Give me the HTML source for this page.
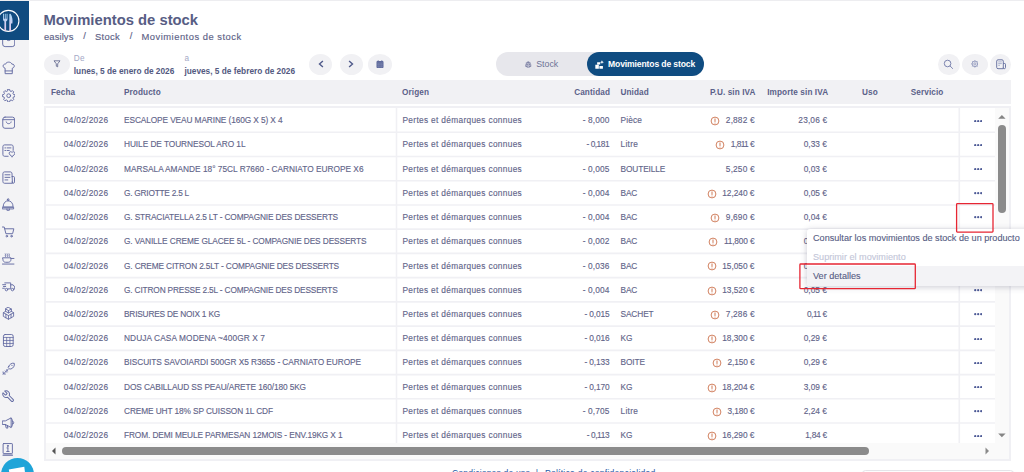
<!DOCTYPE html>
<html lang="es"><head><meta charset="utf-8"><title>Movimientos de stock</title>
<style>
*{box-sizing:border-box;margin:0;padding:0}
html,body{width:1024px;height:472px;overflow:hidden;background:#fff}
body{position:relative;font-family:"Liberation Sans",sans-serif;color:#555a7d;font-size:8.3px}
.topline{position:absolute;left:0;top:0;width:1024px;height:1px;background:#ededf0}
.sidebar{position:absolute;left:0;top:0;width:29px;height:472px;background:#f3f3f5}
.logo{position:absolute;left:0;top:0;width:29px;height:40.300px;background:#104b80}
.sidebar svg.ic{position:absolute;left:1.700px;width:13.400px;height:13.400px;fill:none;stroke:#636ba3;stroke-width:.85;stroke-linecap:round;stroke-linejoin:round}
.chat{position:absolute;left:.9px;top:457.900px;width:33.200px;height:33.200px;border-radius:50%;background:#1fa4d8;overflow:hidden}
.title{position:absolute;left:43.5px;top:10.1px;font-size:14.8px;font-weight:700;color:#575d84;letter-spacing:0px;white-space:nowrap;line-height:20px}
.crumb{position:absolute;left:44px;top:30.4px;font-size:9.4px;color:#5d6287;-webkit-text-stroke:.15px #5d6287;white-space:nowrap;line-height:13px}
.crumb span{position:absolute;top:0}
.pillbtn{position:absolute;background:#f1f1f4;border-radius:50%}
.hi{position:absolute}
.lbl{position:absolute;font-size:8.2px;color:#a4a8c6;line-height:9px;white-space:nowrap;letter-spacing:0.3px}
.dt{position:absolute;font-size:8.3px;font-weight:700;color:#535980;line-height:11px;white-space:nowrap;letter-spacing:0px}
.tabs{position:absolute;left:495.75px;top:52px;width:208.5px;height:24.3px;border-radius:12.2px;background:#e7e7ec}
.tabs .act{position:absolute;left:91px;top:0;width:117.5px;height:24.3px;border-radius:12.2px;background:#0f4c81}
.tabs .t1{position:absolute;left:40.5px;top:6.6px;font-size:8.8px;color:#6d7296;line-height:11px;white-space:nowrap}
.tabs .t2{position:absolute;left:112.3px;top:6.6px;font-size:8.6px;color:#fff;font-weight:700;line-height:11px;white-space:nowrap;letter-spacing:-0.14px}
.thead{position:absolute;left:44px;top:79.5px;width:967px;height:24.3px;background:#f1f1f4}
.thead span{position:absolute;top:7.2px;font-size:8.2px;font-weight:700;color:#5b6189;line-height:11px;white-space:nowrap;letter-spacing:0.1px}
.tbody{position:absolute;left:44px;top:106px;width:967px;height:354.5px;border:2px solid #f0f0f4;background:#fff;overflow:hidden}
.row{position:absolute;left:-0.5px;width:951px;height:24.2px}
.c{position:absolute;top:1.1px;height:23px;line-height:23.4px;white-space:nowrap;color:#5f6489;-webkit-text-stroke:.13px #5f6489}
.date{left:18.3px;letter-spacing:0.3px}
.prod{left:78.5px;letter-spacing:-0.09px}
.orig{left:357px;letter-spacing:0.33px}
.qty{right:387px;text-align:right}
.unit{left:575px;letter-spacing:0.1px}
.pu{right:242px;text-align:right}
.amt{right:169.5px;text-align:right}
.warn{width:10px;height:10px;vertical-align:-2.9px;margin-right:5.600px}
.dots{position:absolute;left:928.300px;top:11.500px;width:8.400px;height:2.400px;fill:#4d5a96}
.menu{position:absolute;left:806.5px;top:228.7px;width:230px;height:57.6px;background:#fff;border-radius:3px;box-shadow:0 1px 6px rgba(60,60,90,.28)}
.menu div{position:absolute;left:0;width:100%;height:19.2px;line-height:19.2px;padding-left:6.5px;font-size:9.1px;color:#575d84;-webkit-text-stroke:.12px currentColor;white-space:nowrap;letter-spacing:0.01px}
.red{position:absolute;overflow:visible}
.red rect{fill:none;stroke:#e62633;stroke-width:1.300}
.foot{position:absolute;top:467.700px;font-size:8.6px;color:#1f5aa6;white-space:nowrap;line-height:11px}

</style></head>
<body>
<div class="sidebar">
<svg class="ic" style="top:34.3px" viewBox="0 0 12 12"><rect x="0.600" y="1.5" width="10.800" height="9.800" rx="2.200"/><path d="M3.800 4.500c.3 2 4.100 2 4.400 0"/></svg>
<div class="logo"><svg width="29" height="41" viewBox="0 0 29 41"><defs><linearGradient id="lg" x1="0" y1="0" x2="0" y2="1"><stop offset="0" stop-color="#a5d6f6"/><stop offset=".55" stop-color="#cfd0f0"/><stop offset="1" stop-color="#ecc6ea"/></linearGradient></defs><circle cx="8.400" cy="20.900" r="10.500" fill="none" stroke="#fff" stroke-width="1.100"/><path d="M3 13.800h.9v5h.9v-5h.9v5h.9v-5h.9v5.200c0 1.300-.6 2.100-1.400 2.400v8.900c0 1.100-1.700 1.100-1.700 0v-8.900C3.600 21.100 3 20.300 3 19z" fill="url(#lg)"/><path d="M9.300 14.400c0-.8 1-.9 1.400-.3 1.600 2.600 2.200 6 1.700 9.300l-1.400.2v6.900c0 1.100-1.700 1.100-1.700 0z" fill="url(#lg)"/></svg></div>
<svg class="ic" style="top:61.3px" viewBox="0 0 12 12"><path d="M2.800 11V6.500C.100 5.900.600 2.300 3.200 2.800 3.800.400 8.200.400 8.800 2.800c2.600-.5 3.100 3.100.4 3.700V11zM2.800 8.900h6.400"/></svg>
<svg class="ic" style="top:88.6px" viewBox="0 0 12 12"><circle cx="6" cy="6" r="1.700"/><path d="M5.200.800h1.600l.3 1.400 1 .5 1.300-.7 1.100 1.100-.7 1.300.5 1 1.400.3v1.600l-1.400.3-.5 1 .7 1.300-1.100 1.100-1.300-.7-1 .5-.3 1.400H5.200l-.3-1.400-1-.5-1.300.7-1.100-1.100.7-1.300-.5-1L.3 7.300V5.700l1.400-.3.5-1-.7-1.300 1.100-1.100 1.300.7 1-.5z" transform="translate(0 -0.500)"/></svg>
<svg class="ic" style="top:116.3px" viewBox="0 0 12 12"><rect x="0.700" y="1" width="10.600" height="10" rx="2"/><path d="M.700 3.300h10.600M3.800 5.300c.3 2.200 4.100 2.200 4.400 0"/></svg>
<svg class="ic" style="top:144.3px" viewBox="0 0 12 12"><path d="M5.500 11H2.400C1.400 11 .800 10.400.800 9.400V2.400C.800 1.400 1.400.800 2.400.800h6c1 0 1.600.6 1.600 1.600v3.300"/><path d="M2.600 3.500h.6M4.500 3.500h3.500M2.600 5.800h.6M4.500 5.800h2"/><path d="M9 11.200c-1.400-.9-2.600-1.900-2.600-3 0-1.500 2-1.700 2.600-.5.600-1.200 2.600-1 2.600.5 0 1.100-1.200 2.100-2.600 3z"/></svg>
<svg class="ic" style="top:171.3px" viewBox="0 0 12 12"><path d="M9 11H2.400C1.400 11 .800 10.400.800 9.400V2.400C.800 1.400 1.400.800 2.400.800h5c1 0 1.600.6 1.600 1.600zM9 5h1.400c.5 0 .8.300.8.800v4c0 .7-.5 1.200-1.100 1.200S9 10.500 9 9.800"/><path d="M2.700 3.400h4.400M2.700 5.700h4.400M2.700 8h2.500"/></svg>
<svg class="ic" style="top:198.3px" viewBox="0 0 12 12"><path d="M5.500 2.400c-2.500 0-4.400 2.300-4.400 5.300v.5h8.800v-.5c0-3-1.900-5.300-4.400-5.300zM4.800 1.300a.7.7 0 1 0 1.400 0a.7.7 0 1 0-1.400 0M.6 8.200h9.800v1.600H.6zM4.400 9.800v1.200h2.200V9.800"/></svg>
<svg class="ic" style="top:225.8px" viewBox="0 0 12 12"><path d="M.4.900h1.600l1.500 6h6l1.100-4.400H2.600"/><circle cx="4.300" cy="9.100" r=".7"/><circle cx="8.500" cy="9.100" r=".7"/></svg>
<svg class="ic" style="top:253.3px" viewBox="0 0 12 12"><path d="M.8 4.300h7.200v1.600c0 1.400-1 2.400-2.400 2.400H3.200C1.800 8.300.8 7.300.8 5.900zM8 4.900h2.700M.4 9.900h10.300M3 3.100c-.6-.7.600-1.300 0-2.300M4.700 3.100c-.6-.7.600-1.300 0-2.300M6.400 3.100c-.6-.7.600-1.300 0-2.300"/></svg>
<svg class="ic" style="top:280.3px" viewBox="0 0 12 12"><path d="M2.500 2.600h5.300v5.300H5.200M7.800 4.300h2.100l1.500 1.900v1.700h-.7"/><circle cx="4" cy="8.600" r="1.100"/><circle cx="9.400" cy="8.600" r="1.100"/><path d="M.600 4.200h2.700M1.300 5.800h2M.600 7.400h1.600"/></svg>
<svg class="ic" style="top:307.3px" viewBox="0 0 12 12"><path stroke-width=".8" d="M5.800.4l2.600 1.400v2.100L5.800 5.300 3.200 3.900V1.800zM3.200 1.800l2.600 1.400 2.600-1.400M5.800 3.200v2.100M3.200 3.900L1.200 5.100v3.300L5.800 11l4.600-2.600V5.100L8.400 3.900M1.200 5.100l4.600 2.600 4.600-2.600M5.800 7.700V11M3.500 6.400v3.300M8.100 6.400v3.300"/></svg>
<svg class="ic" style="top:334.3px" viewBox="0 0 12 12"><rect x="1.300" y=".4" width="8.700" height="10.800" rx="1.600"/><path d="M1.300 3.100H10M4.200 3.100v8.100M7.100 3.100v8.100M1.300 5.800H10M1.300 8.500H10" stroke-width=".7"/></svg>
<svg class="ic" style="top:361.8px" viewBox="0 0 12 12"><path d="M1 11l4.500-4.500M6 4c.5-2 3-3.400 5-2.800.5 2-.8 4.400-2.900 5-1 .3-2.100-.2-2.400-.9S5.700 4.700 6 4zM3 10.800l-1.800-.2-.2-1.700M4 7l1.200 1.200M3 8l1.200 1.200M8.600 2.800l.6.600"/></svg>
<svg class="ic" style="top:389.8px" viewBox="0 0 12 12"><g transform="translate(11.700 -.3) scale(-.5 .5)"><path stroke-width="1.800" d="M14.700 6.300a1 1 0 0 0 0 1.400l1.600 1.600a1 1 0 0 0 1.400 0l3.770-3.770a6 6 0 0 1-7.940 7.940l-6.910 6.910a2.120 2.120 0 0 1-3-3l6.910-6.910a6 6 0 0 1 7.940-7.940l-3.760 3.760z"/></g></svg>
<svg class="ic" style="top:416.3px" viewBox="0 0 12 12"><path d="M.6 4.400h2.400l5.200-2.700v8.600L3 7.600H.6zM3 7.600l.8 3.200h1.500l-.6-2.400M8.200 1.700c1.700 0 1.700 8.600 0 8.600M9.700 4.600c1.200.3 1.200 2.500 0 2.800"/></svg>
<svg class="ic" style="top:443.3px" viewBox="0 0 12 12"><rect x="1" y=".5" width="8.300" height="9" rx=".5"/><path d="M1 10.900h8.300" stroke-width="1.100"/><path d="M5.300 4.400v3.100M4.400 4.400h.9M4.200 7.600h2.200"/><circle cx="5.200" cy="2.600" r=".45" fill="#636ba3"/></svg>
</div>
<div class="topline"></div>
<div class="title">Movimientos de stock</div>
<div class="crumb"><span style="left:0;letter-spacing:.11px">easilys</span><span style="left:39.300px;top:-1.500px">/</span><span style="left:51px;letter-spacing:.3px">Stock</span><span style="left:85.700px;top:-1.500px">/</span><span style="left:97.500px;letter-spacing:.5px">Movimientos de stock</span></div>
<div class="pillbtn" style="left:43.500px;top:53.800px;width:26.300px;height:21px"></div>
<svg class="hi" style="left:52.700px;top:60.300px;width:8px;height:8px" viewBox="0 0 8 8"><path d="M1 .800h6L4.700 3.800v3L3.300 6.200V3.800z" fill="none" stroke="#585e86" stroke-width=".8" stroke-linejoin="round"/></svg>
<div class="lbl" style="left:73.800px;top:53.600px">De</div>
<div class="lbl" style="left:184.500px;top:53.600px">a</div>
<div class="dt" style="left:73.800px;top:65.700px">lunes, 5 de enero de 2026</div>
<div class="dt" style="left:184.400px;top:65.700px">jueves, 5 de febrero de 2026</div>
<div class="pillbtn" style="left:309.400px;top:53.800px;width:22.800px;height:21px"></div>
<svg class="hi" style="left:317.200px;top:60.400px;width:8px;height:8px" viewBox="0 0 8 8"><path d="M5.900 1L2.500 4l3.400 3" fill="none" stroke="#4f5a8a" stroke-width="1.400"/></svg>
<div class="pillbtn" style="left:339.800px;top:53.800px;width:22.800px;height:21px"></div>
<svg class="hi" style="left:347px;top:60.400px;width:8px;height:8px" viewBox="0 0 8 8"><path d="M2.100 1L5.500 4 2.100 7" fill="none" stroke="#4f5a8a" stroke-width="1.400"/></svg>
<div class="pillbtn" style="left:367.700px;top:53.800px;width:24.600px;height:21px"></div>
<svg class="hi" style="left:376.200px;top:60px;width:8px;height:8.400px" viewBox="0 0 8 8.400"><path d="M.5 1.900c0-.5.300-.8.800-.8h5.400c.5 0 .8.300.8.800v5.300c0 .5-.3.800-.8.800H1.300c-.5 0-.8-.3-.8-.8z" fill="#5f6a9c"/><path d="M2.200.3v1.500M5.800.3v1.500" stroke="#5f6a9c" stroke-width=".9"/><path d="M.5 3h7M.5 4.700h7M.5 6.300h7M2.800 3v5M5.200 3v5" stroke="#8d96bd" stroke-width=".35"/></svg>
<div class="tabs"><div class="act"></div>
<svg style="position:absolute;left:29.400px;top:8.500px;width:6.500px;height:7.400px" viewBox="0 0 6.500 7.200"><path d="M3.250.2l2.400 1.200v1.600l.6.400v1.900L3.250 7 .25 5.300V3.400l.6-.4V1.400z" fill="#8286a8"/><path d="M.9 1.500l2.350 1.200L5.600 1.500M.4 3.600l2.850 1.500 2.850-1.500M3.250 2.700V7" stroke="#e7e7ec" stroke-width=".5" fill="none"/></svg>
<svg style="position:absolute;left:99.700px;top:7.900px;width:9.200px;height:9.200px" viewBox="0 0 8.600 8.600"><path d="M.3 4.500h3.300v3.600H.3zM4.100 5.700h3.300v2.400H4.100zM2 2.200h2.900v2H2z" fill="#fff"/><path d="M6.500.2l.5 1.300 1.300.5-1.300.5-.5 1.300L6 2.500 4.700 2 6 1.500z" fill="#fff"/></svg>
<span class="t1">Stock</span><span class="t2">Movimientos de stock</span></div>
<div class="pillbtn" style="left:938px;top:53.500px;width:21.600px;height:21.600px"></div>
<svg class="hi" style="left:943px;top:58.500px;width:12px;height:12px" viewBox="0 0 12 12"><circle cx="4.600" cy="4.500" r="3.300" fill="none" stroke="#6f78a8" stroke-width=".9"/><path d="M7.100 7l2.500 2.500" stroke="#6f78a8" stroke-width=".9" stroke-linecap="round"/></svg>
<div class="pillbtn" style="left:961.800px;top:53.800px;width:26px;height:21px"></div>
<svg class="hi" style="left:970.600px;top:60.400px;width:7.800px;height:7.800px" viewBox="0 0 9 9"><circle cx="4.500" cy="4.500" r="3.200" fill="none" stroke="#8088b3" stroke-width=".9"/><circle cx="4.500" cy="4.500" r="1.300" fill="none" stroke="#8088b3" stroke-width=".8"/><path d="M4.500.3v1M4.500 7.700v1M.3 4.500h1M7.700 4.500h1M1.500 1.500l.7.700M6.800 6.800l.7.700M7.500 1.500l-.7.700M1.500 7.500l.7-.7" stroke="#8088b3" stroke-width=".9"/></svg>
<div class="pillbtn" style="left:989.500px;top:53.500px;width:21.600px;height:21.600px"></div>
<svg class="hi" style="left:995.500px;top:59px;width:10.500px;height:10.500px" viewBox="0 0 10.500 10.500"><path d="M7.300 9.700H2c-.8 0-1.300-.5-1.300-1.300V2.100C.7 1.300 1.200.8 2 .8h4c.8 0 1.300.5 1.300 1.300zM7.300 4.500h1.400c.5 0 .8.300.8.800v3.300c0 .7-.5 1.100-1.100 1.100s-1.100-.4-1.100-1.100" fill="none" stroke="#5f6a9c" stroke-width=".9"/><path d="M2.200 2.900h3.600M2.200 4.600h3.600M2.200 6.300h1.800" stroke="#8d96bd" stroke-width=".7"/></svg>
<div class="thead"><span style="left:7px">Fecha</span><span style="left:80px">Producto</span><span style="left:358px">Origen</span><span style="right:401px">Cantidad</span><span style="left:576.500px">Unidad</span><span style="right:255.500px">P.U. sin IVA</span><span style="right:182.800px">Importe sin IVA</span><span style="left:818px">Uso</span><span style="left:866.800px">Servicio</span></div>
<div class="tbody">
<div class="row" style="top:0.00px"><span class="c date">04/02/2026</span><span class="c prod" style="letter-spacing:-0.096px">ESCALOPE VEAU MARINE (160G X 5) X 4</span><span class="c orig">Pertes et démarques connues</span><span class="c qty" style="letter-spacing:0.165px;margin-right:-0.165px">- 8,000</span><span class="c unit" style="letter-spacing:0.167px">Pièce</span><span class="c pu" style="margin-right:-0.159px"><svg class="warn" viewBox="0 0 10 10"><circle cx="5" cy="5" r="3.9" fill="none" stroke="#cf7a57" stroke-width="0.95"/><path d="M5 2.9v2.6" stroke="#cf7a57" stroke-width="1" stroke-linecap="round"/><circle cx="5" cy="7" r="0.55" fill="#cf7a57"/></svg><span class="puv" style="letter-spacing:0.159px">2,882 €</span></span><span class="c amt" style="letter-spacing:0.159px;margin-right:-0.159px">23,06 €</span><svg class="dots" viewBox="0 0 8.400 2.400"><circle cx="1.200" cy="1.200" r="1.120"/><circle cx="4.200" cy="1.200" r="1.120"/><circle cx="7.200" cy="1.200" r="1.120"/></svg></div>
<div class="row" style="top:24.23px"><span class="c date">04/02/2026</span><span class="c prod" style="letter-spacing:-0.059px">HUILE DE TOURNESOL ARO 1L</span><span class="c orig">Pertes et démarques connues</span><span class="c qty" style="letter-spacing:-0.478px;margin-right:0.478px">- 0,181</span><span class="c unit" style="letter-spacing:0.312px">Litre</span><span class="c pu" style="margin-right:0.568px"><svg class="warn" viewBox="0 0 10 10"><circle cx="5" cy="5" r="3.9" fill="none" stroke="#cf7a57" stroke-width="0.95"/><path d="M5 2.9v2.6" stroke="#cf7a57" stroke-width="1" stroke-linecap="round"/><circle cx="5" cy="7" r="0.55" fill="#cf7a57"/></svg><span class="puv" style="letter-spacing:-0.568px">1,811 €</span></span><span class="c amt" style="letter-spacing:0.045px;margin-right:-0.045px">0,33 €</span><svg class="dots" viewBox="0 0 8.400 2.400"><circle cx="1.200" cy="1.200" r="1.120"/><circle cx="4.200" cy="1.200" r="1.120"/><circle cx="7.200" cy="1.200" r="1.120"/></svg></div>
<div class="row" style="top:48.47px"><span class="c date">04/02/2026</span><span class="c prod" style="letter-spacing:0.005px">MARSALA AMANDE 18° 75CL R7660 - CARNIATO EUROPE X6</span><span class="c orig">Pertes et démarques connues</span><span class="c qty" style="letter-spacing:0.165px;margin-right:-0.165px">- 0,005</span><span class="c unit" style="letter-spacing:-0.100px">BOUTEILLE</span><span class="c pu" style="margin-right:-0.159px"><span class="puv" style="letter-spacing:0.159px">5,250 €</span></span><span class="c amt" style="letter-spacing:0.045px;margin-right:-0.045px">0,03 €</span><svg class="dots" viewBox="0 0 8.400 2.400"><circle cx="1.200" cy="1.200" r="1.120"/><circle cx="4.200" cy="1.200" r="1.120"/><circle cx="7.200" cy="1.200" r="1.120"/></svg></div>
<div class="row" style="top:72.70px"><span class="c date">04/02/2026</span><span class="c prod" style="letter-spacing:-0.231px">G. GRIOTTE 2.5 L</span><span class="c orig">Pertes et démarques connues</span><span class="c qty" style="letter-spacing:0.165px;margin-right:-0.165px">- 0,004</span><span class="c unit" style="letter-spacing:-0.100px">BAC</span><span class="c pu" style="margin-right:-0.007px"><svg class="warn" viewBox="0 0 10 10"><circle cx="5" cy="5" r="3.9" fill="none" stroke="#cf7a57" stroke-width="0.95"/><path d="M5 2.9v2.6" stroke="#cf7a57" stroke-width="1" stroke-linecap="round"/><circle cx="5" cy="7" r="0.55" fill="#cf7a57"/></svg><span class="puv" style="letter-spacing:0.007px">12,240 €</span></span><span class="c amt" style="letter-spacing:0.045px;margin-right:-0.045px">0,05 €</span><svg class="dots" viewBox="0 0 8.400 2.400"><circle cx="1.200" cy="1.200" r="1.120"/><circle cx="4.200" cy="1.200" r="1.120"/><circle cx="7.200" cy="1.200" r="1.120"/></svg></div>
<div class="row" style="top:96.94px"><span class="c date">04/02/2026</span><span class="c prod" style="letter-spacing:-0.130px">G. STRACIATELLA 2.5 LT - COMPAGNIE DES DESSERTS</span><span class="c orig">Pertes et démarques connues</span><span class="c qty" style="letter-spacing:0.165px;margin-right:-0.165px">- 0,004</span><span class="c unit" style="letter-spacing:-0.100px">BAC</span><span class="c pu" style="margin-right:-0.159px"><svg class="warn" viewBox="0 0 10 10"><circle cx="5" cy="5" r="3.9" fill="none" stroke="#cf7a57" stroke-width="0.95"/><path d="M5 2.9v2.6" stroke="#cf7a57" stroke-width="1" stroke-linecap="round"/><circle cx="5" cy="7" r="0.55" fill="#cf7a57"/></svg><span class="puv" style="letter-spacing:0.159px">9,690 €</span></span><span class="c amt" style="letter-spacing:0.045px;margin-right:-0.045px">0,04 €</span><svg class="dots" viewBox="0 0 8.400 2.400"><circle cx="1.200" cy="1.200" r="1.120"/><circle cx="4.200" cy="1.200" r="1.120"/><circle cx="7.200" cy="1.200" r="1.120"/></svg></div>
<div class="row" style="top:121.17px"><span class="c date">04/02/2026</span><span class="c prod" style="letter-spacing:-0.103px">G. VANILLE CREME GLACEE 5L - COMPAGNIE DES DESSERTS</span><span class="c orig">Pertes et démarques connues</span><span class="c qty" style="letter-spacing:0.165px;margin-right:-0.165px">- 0,002</span><span class="c unit" style="letter-spacing:-0.100px">BAC</span><span class="c pu" style="margin-right:0.155px"><svg class="warn" viewBox="0 0 10 10"><circle cx="5" cy="5" r="3.9" fill="none" stroke="#cf7a57" stroke-width="0.95"/><path d="M5 2.9v2.6" stroke="#cf7a57" stroke-width="1" stroke-linecap="round"/><circle cx="5" cy="7" r="0.55" fill="#cf7a57"/></svg><span class="puv" style="letter-spacing:-0.155px">11,800 €</span></span><span class="c amt" style="letter-spacing:0.045px;margin-right:-0.045px">0,02 €</span><svg class="dots" viewBox="0 0 8.400 2.400"><circle cx="1.200" cy="1.200" r="1.120"/><circle cx="4.200" cy="1.200" r="1.120"/><circle cx="7.200" cy="1.200" r="1.120"/></svg></div>
<div class="row" style="top:145.41px"><span class="c date">04/02/2026</span><span class="c prod" style="letter-spacing:-0.144px">G. CREME CITRON 2.5LT - COMPAGNIE DES DESSERTS</span><span class="c orig">Pertes et démarques connues</span><span class="c qty" style="letter-spacing:0.165px;margin-right:-0.165px">- 0,036</span><span class="c unit" style="letter-spacing:-0.100px">BAC</span><span class="c pu" style="margin-right:-0.007px"><svg class="warn" viewBox="0 0 10 10"><circle cx="5" cy="5" r="3.9" fill="none" stroke="#cf7a57" stroke-width="0.95"/><path d="M5 2.9v2.6" stroke="#cf7a57" stroke-width="1" stroke-linecap="round"/><circle cx="5" cy="7" r="0.55" fill="#cf7a57"/></svg><span class="puv" style="letter-spacing:0.007px">15,050 €</span></span><span class="c amt" style="letter-spacing:0.045px;margin-right:-0.045px">0,54 €</span><svg class="dots" viewBox="0 0 8.400 2.400"><circle cx="1.200" cy="1.200" r="1.120"/><circle cx="4.200" cy="1.200" r="1.120"/><circle cx="7.200" cy="1.200" r="1.120"/></svg></div>
<div class="row" style="top:169.64px"><span class="c date">04/02/2026</span><span class="c prod" style="letter-spacing:-0.156px">G. CITRON PRESSE 2.5L - COMPAGNIE DES DESSERTS</span><span class="c orig">Pertes et démarques connues</span><span class="c qty" style="letter-spacing:0.165px;margin-right:-0.165px">- 0,004</span><span class="c unit" style="letter-spacing:-0.100px">BAC</span><span class="c pu" style="margin-right:-0.007px"><svg class="warn" viewBox="0 0 10 10"><circle cx="5" cy="5" r="3.9" fill="none" stroke="#cf7a57" stroke-width="0.95"/><path d="M5 2.9v2.6" stroke="#cf7a57" stroke-width="1" stroke-linecap="round"/><circle cx="5" cy="7" r="0.55" fill="#cf7a57"/></svg><span class="puv" style="letter-spacing:0.007px">13,520 €</span></span><span class="c amt" style="letter-spacing:0.045px;margin-right:-0.045px">0,05 €</span><svg class="dots" viewBox="0 0 8.400 2.400"><circle cx="1.200" cy="1.200" r="1.120"/><circle cx="4.200" cy="1.200" r="1.120"/><circle cx="7.200" cy="1.200" r="1.120"/></svg></div>
<div class="row" style="top:193.88px"><span class="c date">04/02/2026</span><span class="c prod" style="letter-spacing:-0.193px">BRISURES DE NOIX 1 KG</span><span class="c orig">Pertes et démarques connues</span><span class="c qty" style="letter-spacing:-0.156px;margin-right:0.156px">- 0,015</span><span class="c unit" style="letter-spacing:-0.100px">SACHET</span><span class="c pu" style="margin-right:-0.159px"><svg class="warn" viewBox="0 0 10 10"><circle cx="5" cy="5" r="3.9" fill="none" stroke="#cf7a57" stroke-width="0.95"/><path d="M5 2.9v2.6" stroke="#cf7a57" stroke-width="1" stroke-linecap="round"/><circle cx="5" cy="7" r="0.55" fill="#cf7a57"/></svg><span class="puv" style="letter-spacing:0.159px">7,286 €</span></span><span class="c amt" style="letter-spacing:-0.484px;margin-right:0.484px">0,11 €</span><svg class="dots" viewBox="0 0 8.400 2.400"><circle cx="1.200" cy="1.200" r="1.120"/><circle cx="4.200" cy="1.200" r="1.120"/><circle cx="7.200" cy="1.200" r="1.120"/></svg></div>
<div class="row" style="top:218.12px"><span class="c date">04/02/2026</span><span class="c prod" style="letter-spacing:0.103px">NDUJA CASA MODENA ~400GR X 7</span><span class="c orig">Pertes et démarques connues</span><span class="c qty" style="letter-spacing:-0.156px;margin-right:0.156px">- 0,016</span><span class="c unit" style="letter-spacing:-0.100px">KG</span><span class="c pu" style="margin-right:-0.007px"><svg class="warn" viewBox="0 0 10 10"><circle cx="5" cy="5" r="3.9" fill="none" stroke="#cf7a57" stroke-width="0.95"/><path d="M5 2.9v2.6" stroke="#cf7a57" stroke-width="1" stroke-linecap="round"/><circle cx="5" cy="7" r="0.55" fill="#cf7a57"/></svg><span class="puv" style="letter-spacing:0.007px">18,300 €</span></span><span class="c amt" style="letter-spacing:0.045px;margin-right:-0.045px">0,29 €</span><svg class="dots" viewBox="0 0 8.400 2.400"><circle cx="1.200" cy="1.200" r="1.120"/><circle cx="4.200" cy="1.200" r="1.120"/><circle cx="7.200" cy="1.200" r="1.120"/></svg></div>
<div class="row" style="top:242.35px"><span class="c date">04/02/2026</span><span class="c prod" style="letter-spacing:-0.054px">BISCUITS SAVOIARDI 500GR X5 R3655 - CARNIATO EUROPE</span><span class="c orig">Pertes et démarques connues</span><span class="c qty" style="letter-spacing:-0.156px;margin-right:0.156px">- 0,133</span><span class="c unit" style="letter-spacing:-0.100px">BOITE</span><span class="c pu" style="margin-right:0.112px"><svg class="warn" viewBox="0 0 10 10"><circle cx="5" cy="5" r="3.9" fill="none" stroke="#cf7a57" stroke-width="0.95"/><path d="M5 2.9v2.6" stroke="#cf7a57" stroke-width="1" stroke-linecap="round"/><circle cx="5" cy="7" r="0.55" fill="#cf7a57"/></svg><span class="puv" style="letter-spacing:-0.112px">2,150 €</span></span><span class="c amt" style="letter-spacing:0.045px;margin-right:-0.045px">0,29 €</span><svg class="dots" viewBox="0 0 8.400 2.400"><circle cx="1.200" cy="1.200" r="1.120"/><circle cx="4.200" cy="1.200" r="1.120"/><circle cx="7.200" cy="1.200" r="1.120"/></svg></div>
<div class="row" style="top:266.58px"><span class="c date">04/02/2026</span><span class="c prod" style="letter-spacing:-0.099px">DOS CABILLAUD SS PEAU/ARETE 160/180 5KG</span><span class="c orig">Pertes et démarques connues</span><span class="c qty" style="letter-spacing:-0.156px;margin-right:0.156px">- 0,170</span><span class="c unit" style="letter-spacing:-0.100px">KG</span><span class="c pu" style="margin-right:-0.007px"><svg class="warn" viewBox="0 0 10 10"><circle cx="5" cy="5" r="3.9" fill="none" stroke="#cf7a57" stroke-width="0.95"/><path d="M5 2.9v2.6" stroke="#cf7a57" stroke-width="1" stroke-linecap="round"/><circle cx="5" cy="7" r="0.55" fill="#cf7a57"/></svg><span class="puv" style="letter-spacing:0.007px">18,204 €</span></span><span class="c amt" style="letter-spacing:0.045px;margin-right:-0.045px">3,09 €</span><svg class="dots" viewBox="0 0 8.400 2.400"><circle cx="1.200" cy="1.200" r="1.120"/><circle cx="4.200" cy="1.200" r="1.120"/><circle cx="7.200" cy="1.200" r="1.120"/></svg></div>
<div class="row" style="top:290.82px"><span class="c date">04/02/2026</span><span class="c prod" style="letter-spacing:-0.097px">CREME UHT 18% SP CUISSON 1L CDF</span><span class="c orig">Pertes et démarques connues</span><span class="c qty" style="letter-spacing:0.165px;margin-right:-0.165px">- 0,705</span><span class="c unit" style="letter-spacing:0.312px">Litre</span><span class="c pu" style="margin-right:0.112px"><svg class="warn" viewBox="0 0 10 10"><circle cx="5" cy="5" r="3.9" fill="none" stroke="#cf7a57" stroke-width="0.95"/><path d="M5 2.9v2.6" stroke="#cf7a57" stroke-width="1" stroke-linecap="round"/><circle cx="5" cy="7" r="0.55" fill="#cf7a57"/></svg><span class="puv" style="letter-spacing:-0.112px">3,180 €</span></span><span class="c amt" style="letter-spacing:0.045px;margin-right:-0.045px">2,24 €</span><svg class="dots" viewBox="0 0 8.400 2.400"><circle cx="1.200" cy="1.200" r="1.120"/><circle cx="4.200" cy="1.200" r="1.120"/><circle cx="7.200" cy="1.200" r="1.120"/></svg></div>
<div class="row" style="top:315.06px"><span class="c date">04/02/2026</span><span class="c prod" style="letter-spacing:-0.109px">FROM. DEMI MEULE PARMESAN 12MOIS - ENV.19KG X 1</span><span class="c orig">Pertes et démarques connues</span><span class="c qty" style="letter-spacing:-0.388px;margin-right:0.388px">- 0,113</span><span class="c unit" style="letter-spacing:-0.100px">KG</span><span class="c pu" style="margin-right:-0.007px"><svg class="warn" viewBox="0 0 10 10"><circle cx="5" cy="5" r="3.9" fill="none" stroke="#cf7a57" stroke-width="0.95"/><path d="M5 2.9v2.6" stroke="#cf7a57" stroke-width="1" stroke-linecap="round"/><circle cx="5" cy="7" r="0.55" fill="#cf7a57"/></svg><span class="puv" style="letter-spacing:0.007px">16,290 €</span></span><span class="c amt" style="letter-spacing:-0.271px;margin-right:0.271px">1,84 €</span><svg class="dots" viewBox="0 0 8.400 2.400"><circle cx="1.200" cy="1.200" r="1.120"/><circle cx="4.200" cy="1.200" r="1.120"/><circle cx="7.200" cy="1.200" r="1.120"/></svg></div>
<svg style="position:absolute;left:-2px;top:-2px" width="967" height="355" viewBox="0 0 967 355"><g stroke="#f0f0f4" stroke-width="1.6">
<path d="M2 26.23h949"/><path d="M2 50.47h949"/><path d="M2 74.70h949"/><path d="M2 98.94h949"/><path d="M2 123.17h949"/><path d="M2 147.41h949"/><path d="M2 171.64h949"/><path d="M2 195.88h949"/><path d="M2 220.12h949"/><path d="M2 244.35h949"/><path d="M2 268.58h949"/><path d="M2 292.82h949"/><path d="M2 317.06h949"/>
<path d="M352.500 2v337M915.300 2v337"/></g></svg>
<div style="position:absolute;left:949px;top:0;width:14px;height:338px;background:#fafafa"></div>
<div style="position:absolute;left:0;top:335.400px;width:963px;height:16px;background:#fafafa"></div>
<div style="position:absolute;left:952px;top:16.600px;width:7.800px;height:88px;border-radius:4px;background:#8b8b8b"></div>
<div style="position:absolute;left:16px;top:339.300px;width:807px;height:7.500px;border-radius:4px;background:#8b8b8b"></div>
<svg style="position:absolute;left:0;top:0" width="963" height="351" viewBox="0 0 963 351"><path d="M952.200 10.800l3.700-3.700 3.700 3.700z" fill="#858585"/><path d="M952.200 325.500l3.700 3.700 3.700-3.700z" fill="#858585"/><path d="M9.500 339.600l-3.500 3.500 3.500 3.500z" fill="#555"/><path d="M939.500 339.600l3.500 3.500-3.500 3.500z" fill="#8a8a8a"/></svg>
</div>
<div class="menu"><div style="top:.700px">Consultar los movimientos de stock de un producto</div><div style="top:19.200px;color:#c3c6d8">Suprimir el movimiento</div><div style="top:37.600px;height:20px;line-height:20.300px;background:#f3f3f6;border-radius:0 0 3px 3px">Ver detalles</div></div>
<svg class="red" style="left:0;top:0" width="1024" height="472" viewBox="0 0 1024 472"><rect x="956.600" y="203.600" width="36.400" height="28.500" rx=".8"/><rect x="799.900" y="264" width="115.400" height="24.700" rx=".8"/></svg>
<div class="foot" style="left:452px;letter-spacing:.15px">Condiciones de uso</div><div class="foot" style="left:535.800px">|</div><div class="foot" style="left:545px;letter-spacing:.23px">Política de confidencialidad</div>
<svg style="position:absolute;left:0;top:460px" width="1024" height="12" viewBox="0 460 1024 12"><rect x="862.400" y="470.600" width="151.200" height="12" rx="3" fill="#fff" stroke="#e2e2e7" stroke-width="1"/></svg>
<div class="chat"><svg width="34" height="34" viewBox="0 0 34 34" style="position:absolute;left:0;top:0"><path d="M7.800 11.600L23.300 8.800l1.200 9.200-15.200 1.800z" fill="#fff"/></svg></div>
</body></html>
